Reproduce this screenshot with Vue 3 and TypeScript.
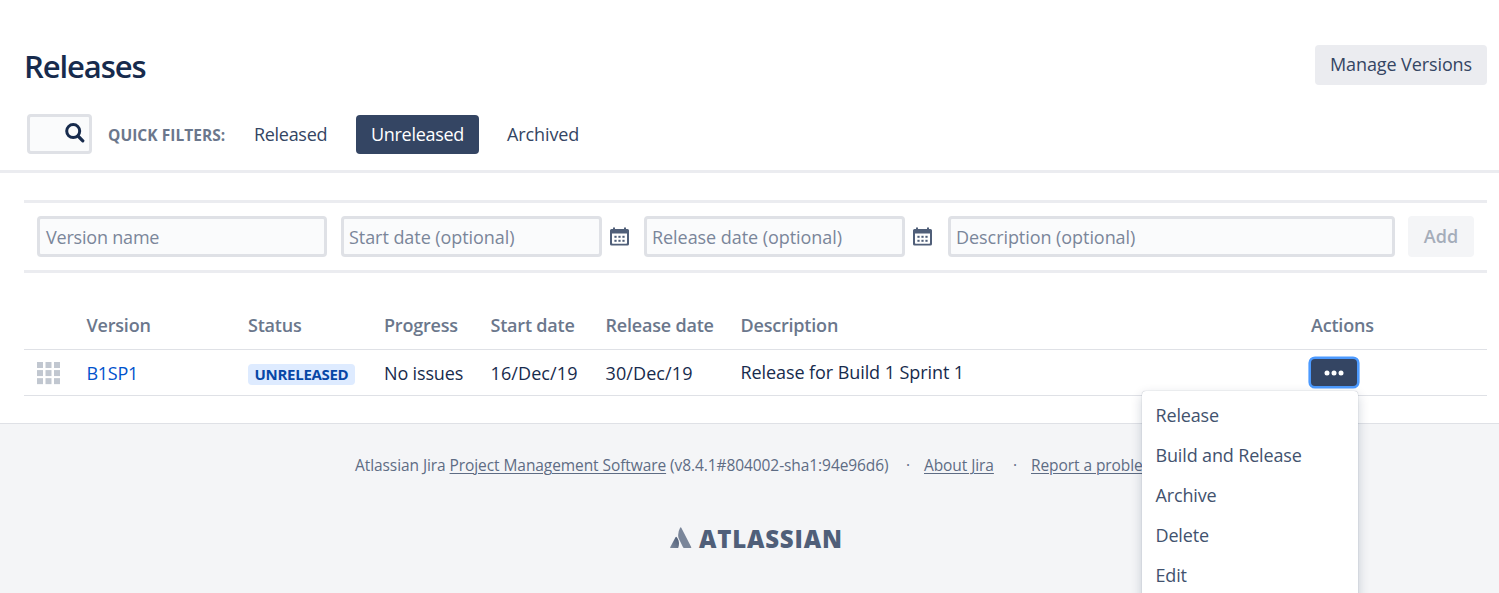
<script setup lang="ts">
interface Field {
  label: string
  kind: string
  picker: boolean
}

const fields: Field[] = [
  { label: 'Version name', kind: 'name', picker: false },
  { label: 'Start date (optional)', kind: 'start', picker: true },
  { label: 'Release date (optional)', kind: 'release', picker: true },
  { label: 'Description (optional)', kind: 'description', picker: false },
]
const headings: string[] = ['Version', 'Status', 'Progress', 'Start date', 'Release date', 'Description', 'Actions']
const actions: string[] = ['Release', 'Build and Release', 'Archive', 'Delete', 'Edit']
const cells: number[] = [0, 8.5, 17]
const dotColumns: number[] = [4, 8, 12]
const dotRows: number[] = [9, 13]
</script>

<template>
  <div class="page">
    <header class="header">
      <h1>Releases</h1>
      <button class="manage">Manage Versions</button>
    </header>

    <nav class="filters">
      <div class="search">
        <svg width="20" height="20" viewBox="0 0 20 20">
          <circle cx="8.2" cy="8.1" r="6.5" fill="none" stroke="#172b4d" stroke-width="3" />
          <path d="M13 13 L17.8 17.8" stroke="#172b4d" stroke-width="3.2" stroke-linecap="round" />
        </svg>
      </div>
      <span class="quick">QUICK FILTERS:</span>
      <a class="filter released">Released</a>
      <a class="filter active">Unreleased</a>
      <a class="filter archived">Archived</a>
    </nav>

    <main class="content">
      <form class="create">
        <template v-for="f in fields" :key="f.kind">
          <div class="field" :class="f.kind"><span>{{ f.label }}</span></div>
          <svg v-if="f.picker" class="calendar" width="19" height="19" viewBox="0 0 19 19">
            <path
              fill-rule="evenodd"
              fill="#505f79"
              d="M1.5 2H3V0.5H5V2H14V0.5H16V2H17.5Q19 2 19 3.5V17Q19 18.6 17.4 18.6H1.6Q0 18.6 0 17V3.5Q0 2 1.5 2ZM2 6.5V16Q2 16.7 2.7 16.7H16.3Q17 16.7 17 16V6.5Z"
            />
            <template v-for="y in dotRows" :key="y">
              <rect v-for="x in dotColumns" :key="x" :x="x + 0.4" :y="y - 0.2" width="2.2" height="2" fill="#505f79" />
            </template>
          </svg>
        </template>
        <button type="button" class="add">Add</button>
      </form>

      <section class="versions">
        <div class="row head">
          <span></span>
          <span v-for="h in headings" :key="h">{{ h }}</span>
        </div>
        <div class="row body">
          <svg class="grip" width="23" height="23" viewBox="0 0 23 23">
            <template v-for="y in cells" :key="y">
              <rect v-for="x in cells" :key="x" :x="x" :y="y * 0.95" width="6" height="6" fill="#c1c7d0" />
            </template>
          </svg>
          <a class="version">B1SP1</a>
          <span class="status"><b>UNRELEASED</b></span>
          <span class="issues">No issues</span>
          <span class="date">16/Dec/19</span>
          <span class="date">30/Dec/19</span>
          <span class="desc">Release for Build 1 Sprint 1</span>
          <div class="action">
            <button class="more" aria-label="Actions">
              <svg width="20" height="6" viewBox="0 0 20 6" fill="#fff">
                <circle cx="3" cy="3" r="2.5" />
                <circle cx="10" cy="3" r="2.5" />
                <circle cx="17" cy="3" r="2.5" />
              </svg>
            </button>
            <ul class="menu">
              <li v-for="a in actions" :key="a">{{ a }}</li>
            </ul>
          </div>
        </div>
      </section>
    </main>

    <footer class="footer">
      <p>
        <span class="product">Atlassian Jira <a>Project Management Software</a> (v8.4.1#804002-sha1:94e96d6)</span>
        <i>·</i>
        <a class="about">About Jira</a>
        <i>·</i>
        <a class="report">Report a problem</a>
      </p>
      <div class="brand">
        <svg width="22" height="22" viewBox="0 0 22 22">
          <defs>
            <linearGradient id="peak" x1="0.9" y1="0.1" x2="0.2" y2="1">
              <stop offset="0" stop-color="#505f79" />
              <stop offset="1" stop-color="#7a869a" />
            </linearGradient>
          </defs>
          <path d="M5.5 10.2Q6.1 9.2 6.8 10.2C9.2 13.2 9.6 17 8.2 21H.6Q-.1 21 .2 20.2Z" fill="url(#peak)" />
          <path d="M10.1.8Q10.7-.2 11.3.8L21.2 20.1Q21.6 21 20.8 21H14Q13.3 21 13 20.3L8.5 11Q7.3 6 10.1.8Z" fill="#7a869a" />
        </svg>
        <strong>ATLASSIAN</strong>
      </div>
    </footer>
  </div>
</template>

<style>
body {
  margin: 0;
  overflow: hidden;
}
</style>

<style scoped>
* {
  box-sizing: border-box;
}
.page {
  width: 1499px;
  height: 593px;
  overflow: hidden;
  display: flex;
  flex-direction: column;
  background: #fff;
  color: #172b4d;
  font: 18px/24px 'Segoe UI', 'Open Sans', 'Noto Sans', sans-serif;
  letter-spacing: -0.3px;
  white-space: nowrap;
}
button {
  border: 0;
  padding: 0;
  font: inherit;
  letter-spacing: inherit;
}
.header {
  display: flex;
  justify-content: space-between;
  padding: 45px 12px 0 24px;
  height: 114px;
}
h1 {
  margin: 0;
  font-size: 31px;
  line-height: 42px;
  font-weight: 600;
  letter-spacing: -1.1px;
}
.manage {
  width: 172px;
  height: 40px;
  padding-bottom: 2px;
  border-radius: 4px;
  background: #ebecf0;
  color: #344563;
  letter-spacing: -0.1px;
}
.filters {
  display: flex;
  height: 59px;
  padding-left: 27px;
  border-bottom: 3px solid #ebecf0;
}
.search {
  width: 65px;
  height: 40px;
  border: 3px solid #dfe1e6;
  border-radius: 4px;
  background: #fafbfc;
  padding: 6px 0 0 35px;
}
.search svg {
  display: block;
}
.quick {
  width: 130px;
  margin: 1px 0 0 16px;
  line-height: 40px;
  font-size: 15.5px;
  font-weight: 700;
  letter-spacing: 0.05px;
  color: #6b778c;
}
.filter {
  height: 39px;
  margin-top: 1px;
  line-height: 38px;
  color: #344563;
}
.released {
  width: 118px;
  padding-left: 16px;
}
.active {
  width: 123px;
  border-radius: 4px;
  background: #344563;
  color: #fff;
  text-align: center;
}
.archived {
  margin-left: 28px;
  letter-spacing: -0.1px;
}
.content {
  height: 250px;
  padding: 27px 12px 0 24px;
}
.create {
  display: flex;
  height: 73px;
  padding: 13px;
  border-top: 3px solid #ebecf0;
  border-bottom: 3px solid #ebecf0;
}
.field {
  height: 41px;
  border: 3px solid #dfe1e6;
  border-radius: 4px;
  background: #fafbfc;
  color: #7a869a;
  padding-left: 5px;
  line-height: 36px;
  letter-spacing: -0.06px;
}
.name {
  width: 290px;
  margin-right: 14px;
  padding-left: 6px;
  letter-spacing: -0.2px;
}
.start,
.release {
  width: 261px;
}
.description {
  width: 447px;
  margin-left: 1px;
}
.calendar {
  margin: 11px 15px 0 8px;
}
.add {
  width: 66px;
  height: 41px;
  margin-left: 13px;
  padding-bottom: 1px;
  border-radius: 4px;
  background: #f4f5f7;
  color: #a5adba;
  font-weight: 600;
  letter-spacing: 0;
}
.row {
  display: grid;
  grid-template-columns: 62.5px 161.5px 136px 106.5px 115px 135px 570.5px 1fr;
  border-bottom: 1px solid #dfe1e6;
}
.head {
  height: 77px;
  padding-top: 40px;
  font-weight: 600;
  color: #6b778c;
  letter-spacing: -0.2px;
}
.body {
  height: 46px;
  line-height: 47px;
}
.grip {
  margin: 12px 0 0 13px;
}
.version {
  color: #0052cc;
}
.issues {
  letter-spacing: -0.15px;
}
.date {
  letter-spacing: 0.1px;
}
.status b {
  display: inline-block;
  width: 107px;
  height: 21px;
  border-radius: 4px;
  background: #deebff;
  color: #0747a6;
  font-size: 15px;
  line-height: 20px;
  text-align: center;
}
.desc {
  line-height: 45px;
  letter-spacing: -0.08px;
}
.action {
  position: relative;
  padding-top: 9px;
}
.more {
  display: flex;
  align-items: center;
  justify-content: center;
  width: 46px;
  height: 27px;
  margin-left: -0.5px;
  border-radius: 4px;
  background: #344563;
  box-shadow: 0 0 0 2.6px #4c9aff;
}
.menu {
  position: absolute;
  z-index: 2;
  top: 41px;
  right: 129px;
  width: 216px;
  height: 230px;
  margin: 0;
  padding: 4px 0 0 13.5px;
  list-style: none;
  background: #fff;
  border-radius: 4px;
  box-shadow: 0 4px 12px rgba(9, 30, 66, 0.2), 0 0 1px rgba(9, 30, 66, 0.4);
  color: #42526e;
  letter-spacing: -0.15px;
}
.menu li {
  height: 40px;
  line-height: 40px;
}
.footer {
  height: 170px;
  border-top: 1px solid #dfe1e6;
  background: #f4f5f7;
  color: #5e6c84;
  font-size: 15.5px;
  letter-spacing: -0.08px;
}
.footer p {
  display: flex;
  margin: 29px 0 0 355px;
}
.footer a {
  text-decoration: underline;
  text-decoration-thickness: 1px;
  text-underline-offset: 2px;
}
.product {
  width: 534px;
}
.footer i {
  width: 35px;
  padding-left: 3px;
  text-align: center;
  font-style: normal;
}
.about {
  width: 72px;
}
.brand {
  display: flex;
  margin: 50px 0 0 670px;
  color: #505f79;
}
.brand strong {
  margin-left: 7px;
  font-size: 24px;
  line-height: 24px;
  font-weight: 800;
  letter-spacing: 0.8px;
}
</style>
